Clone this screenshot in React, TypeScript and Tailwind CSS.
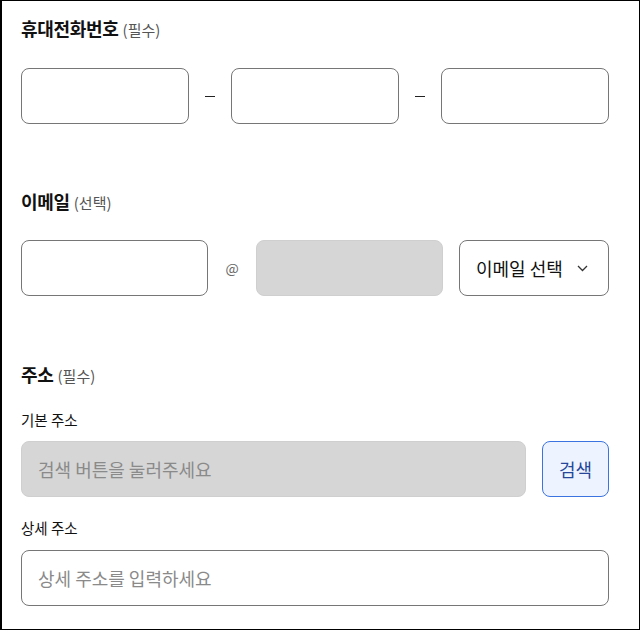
const font = { fontFamily: '"Noto Sans CJK KR", "Noto Sans", sans-serif' };

function SectionTitle({ title, note }: { title: string; note: string }) {
  return (
    <div className="flex items-baseline gap-1 h-6 leading-6">
      <span className="text-[18px] font-bold text-[#111] tracking-[-0.3px]">{title}</span>
      <span className="text-[15px] text-[#555]">{note}</span>
    </div>
  );
}

const box = "h-[56px] rounded-lg border border-[#767676] bg-white";

export default function App() {
  return (
    <div
      className="w-[640px] h-[630px] border border-l-2 border-black bg-white pl-[19px] pt-[15px] text-[#111]"
      style={font}
    >
      <div className="w-[588px]">
        {/* 휴대전화번호 */}
        <SectionTitle title="휴대전화번호" note="(필수)" />
        <div className="mt-[28px] flex items-center">
          <div className={`${box} w-[168px]`} />
          <div className="w-[42px] flex justify-center">
            <div className="w-[10px] h-px bg-[#222]" />
          </div>
          <div className={`${box} w-[168px]`} />
          <div className="w-[42px] flex justify-center">
            <div className="w-[10px] h-px bg-[#222]" />
          </div>
          <div className={`${box} w-[168px]`} />
        </div>

        {/* 이메일 */}
        <div className="mt-[65px]">
          <SectionTitle title="이메일" note="(선택)" />
        </div>
        <div className="mt-[27px] flex items-center">
          <div className={`${box} w-[187px]`} />
          <div className="w-[48px] flex justify-center text-[14px] text-[#666]">@</div>
          <div className="h-[56px] w-[187px] rounded-lg border border-[#cfcfcf] bg-[#d6d6d6]" />
          <div className="ml-[16px] h-[56px] w-[150px] rounded-lg border border-[#767676] flex items-center justify-between pl-[16px] pr-[20px]">
            <span className="text-[18px] text-[#111]">이메일 선택</span>
            <svg width="11" height="7" viewBox="0 0 11 7" fill="none">
              <path d="M1 1 L5.5 5.5 L10 1" stroke="#333" strokeWidth="1.3" />
            </svg>
          </div>
        </div>

        {/* 주소 */}
        <div className="mt-[66px]">
          <SectionTitle title="주소" note="(필수)" />
        </div>
        <div className="mt-[24px] text-[14.5px] h-5 leading-5">기본 주소</div>
        <div className="mt-[11px] flex items-center gap-[16px]">
          <div className="h-[56px] flex-1 rounded-lg border border-[#cfcfcf] bg-[#d6d6d6] flex items-center px-[16px] text-[18px] text-[#8a8a8a]">
            검색 버튼을 눌러주세요
          </div>
          <button className="h-[56px] w-[67px] rounded-lg border border-[#3b73e0] bg-[#eef4ff] text-[18px] text-[#27469a]">
            검색
          </button>
        </div>
        <div className="mt-[21px] text-[14.5px] h-5 leading-5">상세 주소</div>
        <div className="mt-[12px] h-[56px] rounded-lg border border-[#767676] flex items-center px-[16px] text-[18px] text-[#8a8a8a]">
          상세 주소를 입력하세요
        </div>
      </div>
    </div>
  );
}
